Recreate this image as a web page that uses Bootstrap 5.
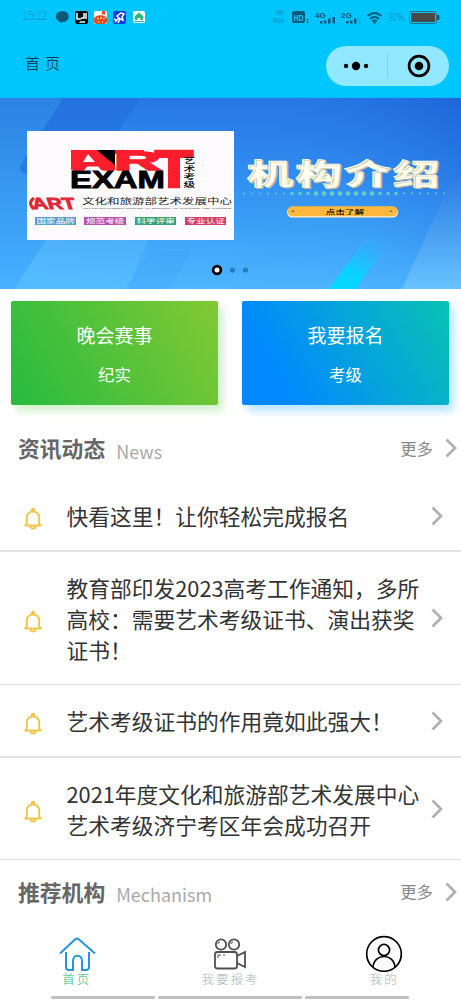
<!DOCTYPE html>
<html lang="zh-CN">
<head>
<meta charset="utf-8">
<meta name="viewport" content="width=device-width, initial-scale=1">
<title>首页</title>
<link href="https://cdn.jsdelivr.net/npm/bootstrap@5.3.0/dist/css/bootstrap.min.css" rel="stylesheet">
<style>
body{font-family:"Noto Sans CJK SC",sans-serif;height:1000px;overflow:hidden;color:#333;background:#fff}
svg{display:block;flex:none}
svg text{font-family:"Noto Sans CJK SC",sans-serif}
svg .latin{font-family:"Liberation Sans",sans-serif;font-weight:700}
.topbar{height:97px;background:#00c6ff}
.status-row{height:34px}
.title-row{height:63px;padding:0 12px 0 25px}
.page-title{font-size:15px;font-weight:300;letter-spacing:5px;color:#123;line-height:20px;margin-top:-5px}
.capsule{width:123px;height:40px;background:#91e8ff;margin-top:1px}
.entries{padding:12px 12px 0 11px;gap:24px;height:126px}
.entry{height:104px;color:#fff;border-radius:2px;padding-top:20px;text-align:center}
.entry-green{background:linear-gradient(60deg,#26bb40,#83c934);box-shadow:5px 6px 9px rgba(100,205,80,.3)}
.entry-blue{background:linear-gradient(60deg,#0288ff 18%,#09c2b3);box-shadow:5px 6px 9px rgba(20,170,240,.3)}
.entry-main{font-size:19px;line-height:27px}
.entry-sub{font-size:16.4px;line-height:24px;margin-top:14px}
.sec-head{height:66px;padding:0 4px 0 18px}
.sec-head.last{height:63px}
.sec-title{font-size:21.8px;font-weight:700;color:#666;line-height:30px}
.sec-en{font-size:18px;color:#aaa;margin-left:11px;line-height:30px;padding-top:5px}
.more{font-size:16.4px;color:#888}
.news-row{padding:0 18px 0 23px;border-bottom:1px solid #e2e2e2}
.news-row.thick{border-bottom-width:2px}
.news-row .bell{margin-top:7px}
.news-text{font-size:21.75px;line-height:31px;margin-left:23.5px;width:356px;color:#333}
.tabs{height:73px;border-top:1px solid #fafafa;padding-top:11px}
.tab-label{font-size:12.5px;font-weight:300;line-height:14px;letter-spacing:2px}
.home-lines{padding:0 52px 0 51px;gap:3px}
.home-lines span{height:3px;background:#c0c0c0;border-radius:1px}
</style>
</head>
<body>
<header class="topbar">
  <svg class="status-row" width="461" height="34" viewBox="0 0 461 34" fill="#075a78">
    <text x="22" y="20" font-size="12" font-weight="100" textLength="25" fill="#087fa5">15:12</text>
    <ellipse cx="62.300" cy="16.500" rx="6.500" ry="5.500"/><path d="M58 20h7l-4 3z"/>
    <rect x="75" y="11" width="13" height="13" rx="2" fill="#080808"/><path d="M77 13v6h4M84 13v5h-3M86 13v6" stroke="#fff" stroke-width="1.500" fill="none"/><path d="M80 21h5v2h-6z" fill="#8cc"/>
    <rect x="94" y="11" width="13" height="13" rx="2" fill="#fff"/><path d="M94 19c1-5 12-5 13 0v3q-1 2-3 2h-7q-3 0-3-3z" fill="#ec4a1c"/><path d="M102 11h3v4l-1.500-1-1.500 1z" fill="#ec4a1c"/><path d="M97 18l2 1M101 17v2M105 18l-2 1M98 22h1M102 22h1" stroke="#fff"/>
    <rect x="113" y="11" width="13" height="13" rx="2" fill="#123edb"/><path d="M115 22l4-4-2-2 4-3 3 1-2 3 1 3-3-1-2 4M116 20l-2-1" stroke="#fff" stroke-width="1.500" fill="none"/>
    <rect x="133" y="11" width="12" height="12" rx="1.500" fill="#f5fff9"/><path d="M134.500 16.500l4.500-4 4.500 4-.5.500v3h-2.500v-2h-3v2H135v-3z" fill="#2cb679"/><path d="M134 21.500h10" stroke="#4ba6b6"/>
    <g fill="#0d6f92" font-weight="300"><text x="274" y="15" font-size="6" textLength="10">3.80</text><text x="273" y="23" font-size="6" textLength="11">KB/s</text></g>
    <rect x="292" y="11" width="13" height="12" rx="2"/><text x="293.500" y="20.500" class="latin" font-size="9" textLength="10" lengthAdjust="spacingAndGlyphs" fill="#10c4f5">HD</text><text x="306" y="23" class="latin" font-size="6">1</text>
    <text x="315" y="17.500" class="latin" font-size="8" textLength="11" lengthAdjust="spacingAndGlyphs">4G</text>
    <path d="M320 21h2.500v2.500H320zM324 20.500h2.500v3H324zM328 18.500h2.500v5H328zM332.500 17h2.500v6.500h-2.500z"/>
    <text x="341" y="17.500" class="latin" font-size="8" textLength="11" lengthAdjust="spacingAndGlyphs">2G</text>
    <path d="M346 21h2.500v2.500H346zM350 20.500h2.500v3H350zM354 18.500h2.500v5H354z"/><path d="M358.500 17h2v6.500h-2z" opacity=".2"/>
    <g fill="none" stroke="#075a78" stroke-width="1.700"><path d="M367.500 16q7-6 14 0M370 19q4.500-4 9 0M372 21.300q2.500-2 5 0"/></g><circle cx="374.500" cy="22.500" r="1.200"/>
    <text x="389" y="20.500" font-size="10" font-weight="300" textLength="15" lengthAdjust="spacingAndGlyphs" fill="#1080a6">92%</text>
    <rect x="409.500" y="11.500" width="27" height="12" rx="2" fill="none" stroke="#246f86"/><rect x="411" y="13" width="24" height="9" fill="#484849"/><path d="M437 15h2q1 2 0 5h-2z"/>
  </svg>
  <div class="title-row d-flex align-items-center justify-content-between">
    <div class="page-title">首页</div>
    <div class="capsule rounded-pill">
      <svg width="123" height="40" viewBox="0 0 123 40"><circle cx="20" cy="20" r="2.200"/><circle cx="30" cy="20" r="4.200"/><circle cx="40" cy="20" r="2.200"/><path d="M61.500 8v24" stroke="#78d5ee"/><circle cx="93" cy="20" r="9.900" fill="none" stroke="#000" stroke-width="2.700"/><circle cx="93" cy="20" r="4.300"/></svg>
    </div>
  </div>
</header>

<section>
<svg width="461" height="192" viewBox="0 97 461 192">
  <defs>
    <linearGradient id="sky" x1=".58" y1="0" x2=".42" y2="1"><stop offset="0" stop-color="#2673e3"/><stop offset=".5" stop-color="#3495f2"/><stop offset="1" stop-color="#4eb6ff"/></linearGradient>
    <linearGradient id="left" x1="0" y1="0" x2="0" y2="1"><stop offset="0" stop-color="#2b82e4"/><stop offset="1" stop-color="#45b1ff"/></linearGradient>
    <linearGradient id="band" x1="0" y1="0" x2="0" y2="1"><stop offset="0" stop-color="#2372df"/><stop offset="1" stop-color="#2672e2" stop-opacity=".6"/></linearGradient>
    <linearGradient id="corner" x1="0" y1="0" x2="0" y2="1"><stop offset="0" stop-color="#2370df"/><stop offset="1" stop-color="#68c3ff"/></linearGradient>
    <linearGradient id="ray" x1="0" y1="1" x2=".5" y2="0"><stop offset="0" stop-color="#00dcff"/><stop offset=".35" stop-color="#0cd0ff"/><stop offset="1" stop-color="#36a5ff" stop-opacity="0"/></linearGradient>
    <linearGradient id="right" x1="0" y1="1" x2="1" y2="0"><stop offset=".45" stop-color="#328bf0" stop-opacity="0"/><stop offset="1" stop-color="#1d66da"/></linearGradient>
  </defs>
  <rect y="97" width="461" height="192" fill="url(#sky)"/>
  <path d="M0 97h140L14 289H0z" fill="url(#left)"/>
  <path d="M64 97h77L82 186 25 174q-8-3-4-10z" fill="url(#band)"/>
  <path d="M14 289l50-78h98l-36 78z" fill="#68c8ff" opacity=".3"/>
  <path d="M126 289l25-38h40l-22 38z" fill="#2e9df3" opacity=".15"/>
  <rect x="200" y="97" width="261" height="192" fill="url(#right)"/>
  <path d="M461 159v130h-59z" fill="url(#corner)"/>
  <path d="M329 289l48-66h24l-45 66z" fill="url(#ray)"/>
  <rect y="97" width="461" height="1" fill="#08b6fa"/>
  <rect x="27" y="131" width="207" height="109" fill="#fdfbfd"/>
  <g fill="#fc1d2d" stroke="#fc1d2d" stroke-width="1.500">
    <text class="latin" x="73" y="169.500" font-size="26" textLength="41" lengthAdjust="spacingAndGlyphs">A</text>
    <text class="latin" x="114" y="169.500" font-size="26.500" textLength="47" lengthAdjust="spacingAndGlyphs">R</text>
    <text class="latin" x="155" y="187" font-size="51" textLength="38" lengthAdjust="spacingAndGlyphs" stroke-width="2.500">T</text>
  </g>
  <path d="M71 150h27l17 14v6H101l-3-4H85l-3 2-11 2z" fill="#fc1d2d"/><path d="M83 162l5-8 7 8z" fill="#fdfbfd"/><path d="M97 150h18v15z"/><path d="M110 150h34v4h-29v16h-5z" fill="#fc1d2d"/><path d="M97 150h18v15z"/>
  <text class="latin" x="70" y="188" font-size="23" textLength="95" lengthAdjust="spacingAndGlyphs" stroke="#000" stroke-width=".8">EXAM</text>
  <g font-size="7.400" font-weight="500"><text transform="translate(183.500 163) scale(1.6 1)">艺</text><text transform="translate(183.500 171) scale(1.6 1)">术</text><text transform="translate(183.500 179) scale(1.6 1)">考</text><text transform="translate(183.500 187) scale(1.6 1)">级</text></g>
  <path d="M34 198q-7 5 0 11" fill="none" stroke="#df2636" stroke-width="3"/>
  <text transform="translate(34 208.800) skewX(18)" class="latin" font-size="16" textLength="43" lengthAdjust="spacingAndGlyphs" fill="#df2636" stroke="#df2636" stroke-width=".8">ART</text>
  <text transform="translate(82 203.800) scale(1.53 1)" font-size="8.200" textLength="98" fill="#222">文化和旅游部艺术发展中心</text>
  <text x="82" y="209" class="latin" font-size="2.500" textLength="149" lengthAdjust="spacingAndGlyphs" fill="#777">ART DEVELOPMENT CENTER OF MINISTRY OF CULTURE AND TOURISM</text>
  <rect x="35" y="217" width="41" height="8" fill="#5a9bcb"/><rect x="84" y="217" width="42" height="8" fill="#b951ae"/><rect x="135" y="217" width="41" height="8" fill="#37a077"/><rect x="185" y="217" width="41" height="8" fill="#d33f69"/>
  <g fill="#fff" font-size="6"><text transform="translate(36.500 223.300) scale(1.6 1)">国家品牌</text><text transform="translate(86 223.300) scale(1.6 1)">规范考级</text><text transform="translate(136.500 223.300) scale(1.6 1)">科学评审</text><text transform="translate(186.500 223.300) scale(1.6 1)">专业认证</text></g>
  <g font-size="29" font-weight="900"><text x="155.300" y="185" transform="scale(1.6 1)" letter-spacing="1.500" fill="#fffeee" stroke="#fffeee" stroke-width=".5" style="text-shadow:1.300px 1.500px 0 #c8ba98;font-family:'Noto Sans CJK SC',sans-serif" transform-origin="0 0" dx="-1.300">机构介绍</text></g>
  <g fill="none" stroke="#65cac8" stroke-linecap="round"><path d="M244 193.500h203" stroke-width="2" stroke-dasharray=".1 7.900"/><path d="M292 193.500h105" stroke-width="3.500" stroke-dasharray=".1 7.900"/><path d="M316 193.500h57" stroke-width="4.700" stroke-dasharray=".1 7.900"/></g>
  <rect x="287" y="207" width="111" height="10.500" rx="5.200" fill="#fff0ce"/><rect x="287.500" y="206.200" width="110" height="10" rx="5" fill="#ffb83b"/><path d="M291 212l2-2 2 2zM389 212l2-2 2 2z" fill="#677e72"/>
  <text transform="translate(325.500 214) scale(1.62 1)" font-size="6" font-weight="500">点击了解</text>
  <circle cx="217" cy="270" r="5.200"/><circle cx="217" cy="270" r="2.500" fill="#fff"/><circle cx="232.500" cy="270" r="2.600" fill="#237cbb"/><circle cx="245.500" cy="270" r="2.600" fill="#237cbb"/>
</svg>
</section>

<section class="entries d-flex">
  <div class="entry entry-green flex-fill"><div class="entry-main">晚会赛事</div><div class="entry-sub">纪实</div></div>
  <div class="entry entry-blue flex-fill"><div class="entry-main">我要报名</div><div class="entry-sub">考级</div></div>
</section>

<svg class="d-none">
  <symbol id="bell" viewBox="0 0 20 24"><g fill="none" stroke="#f2c54a" stroke-width="1.900" stroke-linejoin="round"><path d="M3.800 16.500V10.500c0-8 12.400-8 12.400 0v6l1.700 2H2.100z"/><circle cx="10" cy="3" r="1.300"/><path d="M7.300 19q0 2.500 2.700 2.500t2.700-2.500"/></g></symbol>
  <symbol id="chev" viewBox="0 0 12 20"><path d="M1.500 1.500L10 10l-8.500 8.500" fill="none" stroke="#b0b0b0" stroke-width="2.700"/></symbol>
</svg>

<main>
  <div class="sec-head d-flex align-items-center"><div class="sec-title">资讯动态</div><div class="sec-en">News</div><div class="more ms-auto me-2 ps-2">更多</div><svg class="ms-1" width="12" height="20"><use href="#chev"/></svg></div>
  <div class="news-row thick d-flex align-items-center" style="height:71px"><svg class="bell" width="20" height="24"><use href="#bell"/></svg><div class="news-text">快看这里！让你轻松完成报名</div><svg class="ms-auto" width="12" height="20"><use href="#chev"/></svg></div>
  <div class="news-row d-flex align-items-center" style="height:133px"><svg class="bell" width="20" height="24"><use href="#bell"/></svg><div class="news-text">教育部印发2023高考工作通知，多所高校：需要艺术考级证书、演出获奖证书！</div><svg class="ms-auto" width="12" height="20"><use href="#chev"/></svg></div>
  <div class="news-row thick d-flex align-items-center" style="height:73px"><svg class="bell" width="20" height="24"><use href="#bell"/></svg><div class="news-text">艺术考级证书的作用竟如此强大！</div><svg class="ms-auto" width="12" height="20"><use href="#chev"/></svg></div>
  <div class="news-row d-flex align-items-center" style="height:102px"><svg class="bell" width="20" height="24"><use href="#bell"/></svg><div class="news-text">2021年度文化和旅游部艺术发展中心艺术考级济宁考区年会成功召开</div><svg class="ms-auto" width="12" height="20"><use href="#chev"/></svg></div>
  <div class="sec-head last d-flex align-items-center"><div class="sec-title">推荐机构</div><div class="sec-en">Mechanism</div><div class="more ms-auto me-2 ps-2">更多</div><svg class="ms-1" width="12" height="20"><use href="#chev"/></svg></div>
</main>

<nav>
  <div class="tabs row g-0 text-center">
    <div class="col-4 d-flex flex-column align-items-center" style="color:#21bd72">
      <svg width="38" height="37" viewBox="57 935 38 37" fill="none" stroke="#2496d7" stroke-width="2"><path d="M59 953.500l15-14q2-2 4 0l16 14M65 952v15q0 3 3 3h4v-9c0-7 9-7 9 0v9h4q3 0 3-3v-15"/></svg><div class="tab-label">首页</div>
    </div>
    <div class="col-4 d-flex flex-column align-items-center" style="color:#a5b5af">
      <svg width="38" height="37" viewBox="211 935 38 37" fill="none" stroke="#505052" stroke-width="1.800"><circle cx="221" cy="944.500" r="5.200"/><circle cx="234" cy="944.500" r="5.200"/><rect x="215" y="952" width="22" height="16.500" rx="2.500"/><path d="M237 956l8-4v15l-8-4"/><path d="M218 958v-3h3M223 955h2M218 944q0-2 2-2M231 944q0-2 2-2" stroke-width="1"/></svg><div class="tab-label">我要报考</div>
    </div>
    <div class="col-4 d-flex flex-column align-items-center" style="color:#a5b5af">
      <svg width="38" height="37" viewBox="365 935 38 37" fill="none" stroke="#000" stroke-width="1.700"><circle cx="384" cy="954" r="17.300"/><circle cx="384" cy="950" r="5.600"/><path d="M373 967c1-14 21-14 22 0"/></svg><div class="tab-label">我的</div>
    </div>
  </div>
  <div class="home-lines d-flex"><span style="width:104px"></span><span style="width:144px"></span><span style="width:104px"></span></div>
</nav>
<script src="https://cdn.jsdelivr.net/npm/bootstrap@5.3.0/dist/js/bootstrap.bundle.min.js"></script>
</body>
</html>
